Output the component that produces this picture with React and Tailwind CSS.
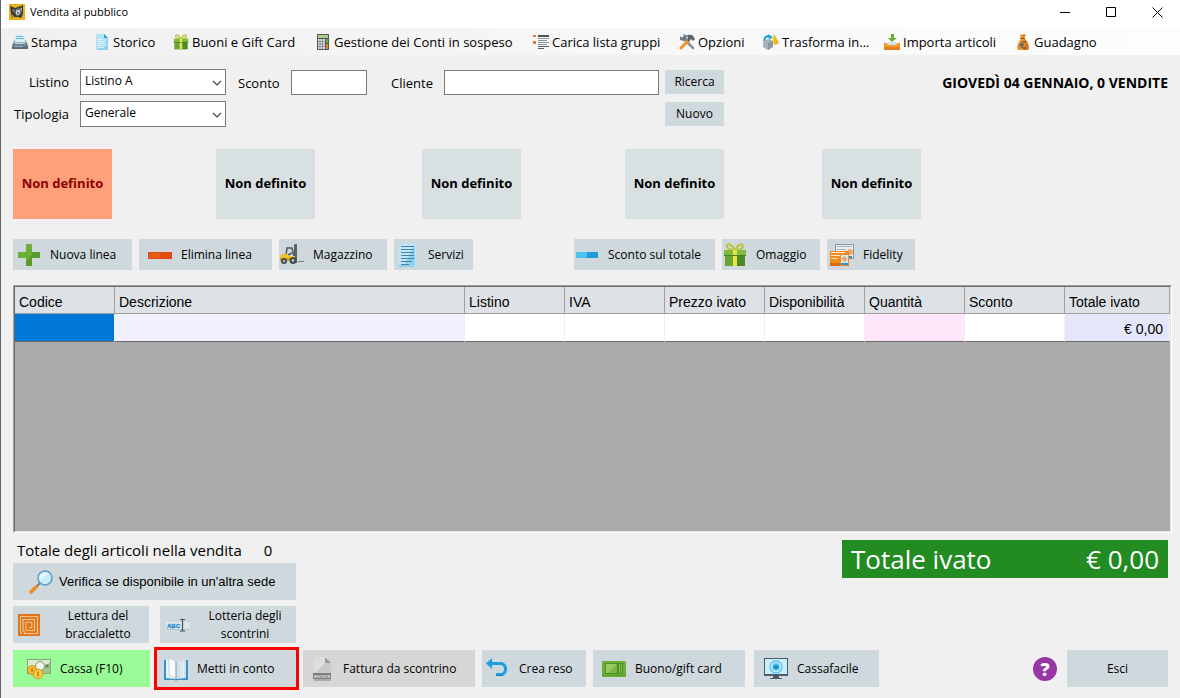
import React, { useState } from 'react';

const PrinterIcon = () => (
  <svg viewBox="0 0 16 16" className="size-4 shrink-0">
    <path d="M3 1h9l1 7H2z" fill="#d6eef8" />
    <path d="M4 2h7v1H4zM4 4h8v1H4z" fill="#6fb5d8" />
    <path d="M2 6l-1 3h14l-1-3h-1v2H3V6z" fill="#9fb0bd" />
    <path d="M1 9h14l1 3v3H0v-3z" fill="#6d8090" />
    <path d="M3 9h10v1H3z" fill="#c3d0d8" />
    <path d="M0 12h16v3H0z" fill="#5b6b78" />
    <path d="M2 12h9v1H2z" fill="#9fb0bd" />
    <path d="M12 11h2v1h-2z" fill="#38b6e8" />
  </svg>
);

const PageIcon = () => (
  <svg viewBox="0 0 16 16" className="size-4 shrink-0">
    <path d="M2 0h8l4 4v12H2z" fill="#b5e2f7" />
    <path d="M2 16L14 4v12z" fill="#93d0ef" />
    <path d="M10 0l4 4h-4z" fill="#2a9fd8" />
    <path d="M4 5h5v1H4zM4 7h8v1H4zM4 9h8v1H4zM4 11h8v1H4zM4 13h6v1H4z" fill="#dff4fd" />
  </svg>
);

const GiftIcon = ({ className = 'size-6' }) => (
  <svg viewBox="0 0 24 24" className={`${className} shrink-0`}>
    <path d="M11 6C9 1 4 0 4 3s4 4 7 4zM13 6c2-5 7-6 7-3s-4 4-7 4z" fill="none" stroke="#b9c53c" strokeWidth="2" />
    <path d="M1 7h22v5H1z" fill="#82b93c" />
    <path d="M2 12h10v11H2z" fill="#6aa52f" />
    <path d="M12 12h10v11H12z" fill="#4e8a26" />
    <path d="M10 7h4v16h-4z" fill="#e9e04d" />
    <path d="M1 12h22v1H1z" fill="#467e22" />
  </svg>
);

const CalculatorIcon = () => (
  <svg viewBox="0 0 16 16" className="size-4 shrink-0">
    <path d="M2 0h12v16H2z" fill="#51575b" />
    <path d="M3 1h10v3H3z" fill="#a9cf86" />
    <path d="M3 5h7v10H3z" fill="#dfe3e5" />
    <path d="M5 5v10M7.500 5v10M3 7.500h7M3 10h7M3 12.500h7" stroke="#6f777c" strokeWidth="0.700" />
    <path d="M11 5h2v4h-2z" fill="#5fae3f" />
    <path d="M11 10h2v5h-2z" fill="#e8832a" />
  </svg>
);

const ListIcon = () => (
  <svg viewBox="0 0 16 16" className="size-4 shrink-0">
    <path d="M0 1h3v2H0zM0 7h3v3H0z" fill="#e07a35" />
    <path d="M5 1h11v2H5z" fill="#4d5459" />
    <path d="M5 4h11v1H5zM5 6h9v1H5zM5 8h11v1H5zM5 10h9v1H5z" fill="#8d969c" />
    <path d="M5 12h11v1H5zM5 14h6v1H5z" fill="#5a6268" />
  </svg>
);

const ToolsIcon = () => (
  <svg viewBox="0 0 16 16" className="size-4 shrink-0">
    <path d="M4 4l10 10" stroke="#87939b" strokeWidth="2.600" strokeLinecap="round" />
    <path d="M1 2l2 2 2-2-1-2 3 1 1 4-3 2-4-1z" fill="#6f7b83" />
    <path d="M2 14l7-7" stroke="#f0932b" strokeWidth="3" strokeLinecap="round" />
    <path d="M7 2c3-2 6-1 7 0l2 3-2 2-2-2-2 3-2-2 1-3z" fill="#5c666d" />
  </svg>
);

const TransformIcon = () => (
  <svg viewBox="0 0 16 16" className="size-4 shrink-0">
    <path d="M1.500 7C1 3 4 1.500 7 2.500" fill="none" stroke="#2aa5e0" strokeWidth="2.400" />
    <path d="M5 0l5 3-4 3z" fill="#2aa5e0" />
    <path d="M11 0l5 9-4 2-4-2z" fill="#f9cf3c" />
    <path d="M11 0l5 9-4 2z" fill="#eeb222" />
    <path d="M0 8l5-3 5 2v6l-5 3-5-3z" fill="#a3b1ba" />
    <path d="M5 9l5-2v6l-5 3z" fill="#8a9aa5" />
  </svg>
);

const ImportIcon = () => (
  <svg viewBox="0 0 16 16" className="size-4 shrink-0">
    <path d="M0 9h3l1 2h8l1-2h3v7H0z" fill="#f39a2b" />
    <path d="M3 8h10l-1 3H4z" fill="#cfe3ec" />
    <path d="M0 13h16v3H0z" fill="#e5801c" />
    <path d="M7 0h3v4h3L8 8 4 4h3z" fill="#6cae34" />
  </svg>
);

const MoneyBagIcon = () => (
  <svg viewBox="0 0 16 16" className="size-4 shrink-0">
    <path d="M5 0l2 1 2-1 2 1-2 4H6z" fill="#e88a24" />
    <path d="M6 5h4c2 2 4 6 4 9l-1 2H3l-1-2c0-3 2-7 4-9z" fill="#f0962c" />
    <path d="M10 5c2 2 4 6 4 9l-1 2H9z" fill="#d9791c" />
    <path d="M5 4h5v1H5z" fill="#8a5a22" />
    <path d="M11 8c-2-1-5 0-5 3s3 4 5 2.500M4.500 10.300H9M4.500 12H9" fill="none" stroke="#5a5f63" strokeWidth="1.200" />
  </svg>
);

const AppLogo = () => (
  <svg viewBox="0 0 16 16" className="size-4 shrink-0">
    <path d="M0 0h16v16H0z" fill="#e8b01f" />
    <path d="M1 2l3 1 2 1 6-2 2-1v9l-2 4-3-1H5l-2 1-1-5z" fill="#3b3b35" />
    <path d="M3 5l3 1-1 3zM7 5l5-1 1 3-2 4-3 1-2-3z" fill="#7b888a" />
    <path d="M7 7l3-1 1 2-2 3-2-1z" fill="#d7dedf" />
    <path d="M8 8h1.500v1.500H8z" fill="#2f3436" />
    <path d="M3 11l2 1-1 2zM12 5l1-2v3z" fill="#f3cf62" />
  </svg>
);

const PlusIcon = () => (
  <svg viewBox="0 0 24 24" className="size-6 shrink-0">
    <path d="M9 1h6v8h8v6h-8v8H9v-8H1V9h8z" fill="#6dae35" />
    <path d="M15 9h8v6h-8v8H9v-5l6-6z" fill="#5a9a2b" />
  </svg>
);

const MinusIcon = () => (
  <svg viewBox="0 0 24 24" className="size-6 shrink-0">
    <path d="M0 9h24v7H0z" fill="#e24a12" />
    <path d="M1 10h11v5H1z" fill="#e65a1b" />
  </svg>
);

const ForkliftIcon = () => (
  <svg viewBox="0 0 24 24" className="size-6 shrink-0">
    <path d="M14 2l1-1h2v19h-3z" fill="#596268" />
    <path d="M18 18h6v1h-6z" fill="#7d868b" />
    <path d="M6 12l1-7h5l2 8M8 12l4-2" fill="none" stroke="#4f575c" strokeWidth="1.500" />
    <path d="M2 11h5l2 2h6v5H0v-4z" fill="#f5c321" />
    <path d="M0 15h14v3H0z" fill="#d9a018" />
    <circle cx="4" cy="18" r="3" fill="#454c50" />
    <circle cx="4" cy="18" r="1.200" fill="#b7bfc3" />
    <circle cx="13" cy="17.500" r="3.500" fill="#454c50" />
    <circle cx="13" cy="17.500" r="1.400" fill="#b7bfc3" />
  </svg>
);

const ServicesIcon = () => (
  <svg viewBox="0 0 24 24" className="size-6 shrink-0">
    <path d="M4 1h17v22H4z" fill="#bfe9fa" />
    <path d="M3 22c0 2 2 2 3 2h11c2 0 2-1 2-2z" fill="#8bd2f0" />
    <path d="M20 1v22H9z" fill="#8fd3f2" />
    <path d="M6 3h13v1H6zM6 6h13v1H6zM6 9h13v1H6zM6 12h13v1H6zM6 15h13v1H6zM6 18h11v1H6zM6 21h8v1H6z" fill="#4b7ea0" />
  </svg>
);

const DiscountIcon = () => (
  <svg viewBox="0 0 24 24" className="size-6 shrink-0">
    <path d="M1 9h22v6H1z" fill="#1f9bdc" />
    <path d="M1 9h11v6H1z" fill="#4cc0ee" />
  </svg>
);

const CardsIcon = () => (
  <svg viewBox="0 0 24 24" className="size-6 shrink-0">
    <path d="M5 1h19v15H5z" fill="#8e979d" />
    <path d="M6 2h17v13H6z" fill="#e4eef2" />
    <path d="M7 3h15v1H7zM7 6h9v1H7z" fill="#a8b4bb" />
    <circle cx="20" cy="9" r="3" fill="#f0a76a" />
    <path d="M17 13h5v2h-5z" fill="#2f8fd0" />
    <path d="M0 8h19v15H0z" fill="#f08a1c" />
    <path d="M1 9h14v1H1zM1 12h9v1H1zM1 15h7v1H1z" fill="#fde8cf" />
    <path d="M11 12h7v10h-7z" fill="#cfe9f7" />
    <circle cx="14.500" cy="16" r="2.500" fill="#f0a76a" />
    <path d="M11 20h7v2h-7z" fill="#2f8fd0" />
    <path d="M0 20h10v3H0z" fill="#dd6b10" />
  </svg>
);

const MagnifierIcon = () => (
  <svg viewBox="0 0 24 24" className="size-6 shrink-0">
    <path d="M1 23l7-7" stroke="#f08a24" strokeWidth="3.500" />
    <path d="M8 16l3-3" stroke="#6d777d" strokeWidth="2" />
    <circle cx="16" cy="8" r="7" fill="#c9ecfb" stroke="#5c9cc5" strokeWidth="1.500" />
    <path d="M11 11a6 6 0 0 1 8-8z" fill="#e8f8fe" />
  </svg>
);

const RfidIcon = () => (
  <svg viewBox="0 0 24 24" className="size-6 shrink-0">
    <path d="M1 1h22v22H1z" fill="#e0771c" />
    <path d="M5 20.500L3.500 19V3.500h17v17h-13V19L6 17.500V6.500h11.500v11H9.500l-.7-.8V9.300h6v5.400h-3" fill="none" stroke="#f6c48c" strokeWidth="1.100" />
  </svg>
);

const TextFieldIcon = () => (
  <svg viewBox="0 0 24 24" className="size-6 shrink-0">
    <path d="M0 9h24v8H0z" fill="#dde6ea" />
    <path d="M0 16h24v1H0z" fill="#b9c6cc" />
    <text x="1" y="15" fontSize="6" fontWeight="bold" fontFamily="Liberation Sans, sans-serif" fill="#1c87c9" stroke="#1c87c9" strokeWidth="0.300">ABC</text>
    <path d="M14 6.500h5M14 18h5M16.500 7v11" stroke="#475056" strokeWidth="1.200" />
  </svg>
);

const CashIcon = () => (
  <svg viewBox="0 0 24 24" className="size-6 shrink-0">
    <path d="M0 2h24v15H0z" fill="#8aa57c" />
    <path d="M1 3h22v13H1z" fill="#dcebd0" />
    <path d="M12 16L23 5v11z" fill="#9fc48b" />
    <circle cx="13" cy="9" r="4.500" fill="#f3f8ee" stroke="#779468" strokeWidth="1" />
    <circle cx="20" cy="9" r="1.800" fill="#5f8a4c" />
    <circle cx="5" cy="13" r="4.500" fill="#f5bd2e" stroke="#c98a14" strokeWidth="0.800" />
    <circle cx="11" cy="17" r="4.800" fill="#f8ca45" stroke="#c98a14" strokeWidth="0.800" />
    <path d="M5 11v4M11 14.500v5" stroke="#b4740e" strokeWidth="1.300" />
  </svg>
);

const BookIcon = () => (
  <svg viewBox="0 0 24 24" className="size-6 shrink-0">
    <path d="M0 3h2v18h20V3h2v20H13l-1 1-1-1H0z" fill="#3a8fc9" />
    <path d="M2 2l9 3v17l-9-1z" fill="#e6f3f9" />
    <path d="M22 3l-10 2v17l10-1z" fill="#cfe2eb" />
    <path d="M5 0l7 5v17l-7-4z" fill="#f7fbfd" stroke="#b5c9d3" strokeWidth="0.800" />
    <path d="M12 5v17" stroke="#8fa6b2" strokeWidth="1" />
    <path d="M17 4v17M19.500 4v17" stroke="#eff7fa" strokeWidth="0.800" />
  </svg>
);

const InvoiceIcon = () => (
  <svg viewBox="0 0 24 24" className="size-6 shrink-0">
    <path d="M4 0h12l5 5v19H4z" fill="#dedede" />
    <path d="M4 17L18 3l3 2v12z" fill="#cacaca" />
    <path d="M15 0l6 6h-6z" fill="#9a9a9a" />
    <path d="M3 16h18v6H3z" fill="#7b7f82" />
    <path d="M4 22h17v2H4z" fill="#a9abac" />
    <text x="4" y="20.500" fontSize="4" fontWeight="bold" fontFamily="Liberation Sans, sans-serif" fill="#e0e2e3">INVOICE</text>
  </svg>
);

const UndoIcon = () => (
  <svg viewBox="0 0 24 24" className="size-6 shrink-0">
    <path d="M5 6.500h11a6 6 0 0 1 0 11h-6" fill="none" stroke="#1f9fdd" strokeWidth="3" />
    <path d="M0 6.500L6 1v11z" fill="#1f9fdd" />
    <path d="M10 18.500h7" stroke="#1479b5" strokeWidth="1" />
  </svg>
);

const BanknoteIcon = () => (
  <svg viewBox="0 0 24 24" className="size-6 shrink-0">
    <rect x="0" y="4" width="24" height="16" rx="1" fill="#6dae35" />
    <path d="M3 6h18v11H3z" fill="#4c8f2a" />
    <path d="M4 7h11v9H4z" fill="#9aca62" />
    <path d="M15 7v9H6z" fill="#7ab545" />
    <path d="M17 7h1v9h-1zM19 7h1v9h-1z" fill="#8cc255" />
    <path d="M0 18h24v1H0z" fill="#5a9a2b" />
  </svg>
);

const MonitorIcon = () => (
  <svg viewBox="0 0 24 24" className="size-6 shrink-0">
    <path d="M0 1h24v18H0z" fill="#4a5a66" />
    <path d="M1 2h22v15H1z" fill="#c8effc" />
    <circle cx="12" cy="10" r="6" fill="none" stroke="#5cc4ec" strokeWidth="1.300" />
    <circle cx="12" cy="10" r="3.800" fill="#57bde9" />
    <circle cx="12" cy="10" r="2" fill="#1684c6" />
    <path d="M9 19h6v2h3v1H6v-1h3z" fill="#4a5a66" />
  </svg>
);

const MENU_ITEMS = [
  { label: 'Stampa', icon: <PrinterIcon />, width: 'w-[82px]' },
  { label: 'Storico', icon: <PageIcon />, width: 'w-[79px]' },
  { label: 'Buoni e Gift Card', icon: <GiftIcon className="size-4" />, width: 'w-[142px]' },
  { label: 'Gestione dei Conti in sospeso', icon: <CalculatorIcon />, width: 'w-[218px]' },
  { label: 'Carica lista gruppi', icon: <ListIcon />, width: 'w-[146px]' },
  { label: 'Opzioni', icon: <ToolsIcon />, width: 'w-[84px]' },
  { label: 'Trasforma in...', icon: <TransformIcon />, width: 'w-[121px]' },
  { label: 'Importa articoli', icon: <ImportIcon />, width: 'w-[131px]' },
  { label: 'Guadagno', icon: <MoneyBagIcon />, width: 'w-[84px]' },
];

const COLUMNS = [
  { label: 'Codice', width: 'w-[100px]', cell: 'bg-[#0078d7]' },
  { label: 'Descrizione', width: '', cell: 'bg-[#f0f0ff]' },
  { label: 'Listino', width: 'w-[100px]', cell: 'bg-white' },
  { label: 'IVA', width: 'w-[100px]', cell: 'bg-white' },
  { label: 'Prezzo ivato', width: 'w-[100px]', cell: 'bg-white' },
  { label: 'Disponibilità', width: 'w-[100px]', cell: 'bg-white' },
  { label: 'Quantità', width: 'w-[100px]', cell: 'bg-[#ffe6fa]' },
  { label: 'Sconto', width: 'w-[100px]', cell: 'bg-white' },
  { label: 'Totale ivato', width: 'w-[105px]', cell: 'bg-[#e6e6fa]', value: '€ 0,00' },
];

const CATEGORY_GAPS = ['', 'ml-[104px]', 'ml-[107px]', 'ml-[104px]', 'ml-[98px]'];

const ToolButton = ({ icon, className, children }) => (
  <button className={`flex shrink-0 items-center gap-[9px] whitespace-nowrap text-[12px] ${className}`}>
    {icon}
    {children}
  </button>
);

const SelectBox = ({ id, options }) => (
  <div className="relative">
    <select
      id={id}
      className="block h-[26px] w-[146px] appearance-none border border-[#7a7a7a] bg-white pb-0.5 pl-1 text-[12px] outline-none"
    >
      {options.map((option) => (
        <option key={option}>{option}</option>
      ))}
    </select>
    <svg viewBox="0 0 10 6" className="pointer-events-none absolute top-[11px] right-1 h-1.5 w-2.5">
      <path d="M1 1l4 4 4-4" fill="none" stroke="#444" strokeWidth="1.200" />
    </svg>
  </div>
);

const TitleBar = () => (
  <header className="flex h-7 items-center bg-white pb-1 pl-2">
    <AppLogo />
    <h1 className="ml-[5px] flex-1 text-[11px]">Vendita al pubblico</h1>
    <button aria-label="Riduci a icona" className="flex h-6 w-[46px] items-center justify-center">
      <svg viewBox="0 0 11 11" className="size-[11px]">
        <path d="M0 5.500h10" stroke="#000" />
      </svg>
    </button>
    <button aria-label="Ingrandisci" className="flex h-6 w-[46px] items-center justify-center">
      <svg viewBox="0 0 11 11" className="size-[11px]">
        <path d="M.5.500h9v9h-9z" fill="none" stroke="#000" />
      </svg>
    </button>
    <button aria-label="Chiudi" className="flex h-6 w-[46px] items-center justify-center">
      <svg viewBox="0 0 11 11" className="size-[11px]">
        <path d="M.5.500l10 10M10.500.500l-10 10" stroke="#000" />
      </svg>
    </button>
  </header>
);

const ArticlesTable = () => (
  <div className="mr-2 flex flex-1 flex-col border border-t-[#a0a0a0] border-r-white border-b-white border-l-[#a0a0a0]">
    <div className="flex-1 border border-t-[#696969] border-r-[#e3e3e3] border-b-[#e3e3e3] border-l-[#696969] bg-[#ababab]">
      <table className="w-full table-fixed border-separate border-spacing-0 font-['Liberation_Sans',Arial,sans-serif] text-[14px]">
        <thead>
          <tr>
            {COLUMNS.map((column) => (
              <th
                key={column.label}
                className={`h-[27px] border-r border-b border-[#a0a0a0] bg-[#dee2e7] px-1 pt-1 pb-0 text-left leading-5 font-normal ${column.width}`}
              >
                {column.label}
              </th>
            ))}
          </tr>
        </thead>
        <tbody>
          <tr>
            {COLUMNS.map((column) => (
              <td
                key={column.label}
                className={`h-7 border-r border-b border-r-[#f0f0f0] border-b-[#696969] px-1.5 pt-0.5 pb-0 text-right leading-5 ${column.cell}`}
              >
                {column.value}
              </td>
            ))}
          </tr>
        </tbody>
      </table>
    </div>
  </div>
);

const App = () => {
  const [selected, setSelected] = useState(0);

  return (
    <div className="flex min-h-screen flex-col border-l border-[#5f666c] bg-[#f0f0f0] font-['Open_Sans','Noto_Sans',sans-serif] text-[13px] text-black">
      <TitleBar />

      <nav className="flex h-[27px] items-center bg-linear-to-r from-[#f0f0f0] to-[#fdfdfd] pl-[11px]">
        {MENU_ITEMS.map((item) => (
          <button key={item.label} className={`flex shrink-0 items-center gap-[3px] whitespace-nowrap ${item.width}`}>
            {item.icon}
            <span className="pt-0.5">{item.label}</span>
          </button>
        ))}
      </nav>

      <main className="flex flex-1 flex-col pt-3.5 pb-[11px] pl-3">
        <form className="flex items-start pr-3" onSubmit={(e) => e.preventDefault()}>
          <div className="grid grid-cols-[56px_146px] items-center gap-x-[11px] gap-y-1.5">
            <label htmlFor="listino" className="pt-0.5 text-right">Listino</label>
            <SelectBox id="listino" options={['Listino A', 'Listino B']} />
            <label htmlFor="tipologia" className="pt-0.5 text-right">Tipologia</label>
            <SelectBox id="tipologia" options={['Generale']} />
          </div>
          <div className="flex h-[27px] items-center">
            <label htmlFor="sconto" className="ml-3 w-[53px] pt-0.5">Sconto</label>
            <input id="sconto" type="text" className="h-[25px] w-[76px] border border-[#7a7a7a] bg-white px-1 outline-none" />
            <label htmlFor="cliente" className="ml-6 w-[53px] pt-0.5">Cliente</label>
            <input id="cliente" type="text" className="h-[25px] w-[215px] border border-[#7a7a7a] bg-white px-1 outline-none" />
          </div>
          <div className="mt-px ml-1.5 flex w-[59px] flex-col gap-2">
            <button type="button" className="h-6 bg-[#cfd8dc] text-[12px]">Ricerca</button>
            <button type="button" className="h-6 bg-[#cfd8dc] text-[12px]">Nuovo</button>
          </div>
          <p className="mt-1 flex-1 text-right text-[14px] leading-5 font-bold">GIOVEDÌ 04 GENNAIO, 0 VENDITE</p>
        </form>

        <div className="mt-[22px] flex">
          {CATEGORY_GAPS.map((gap, index) => (
            <button
              key={index}
              onClick={() => setSelected(index)}
              className={`h-[70px] w-[99px] shrink-0 text-[13px] font-bold ${gap} ${
                selected === index ? 'bg-[#ffa07a] text-[#8b0000]' : 'bg-[#d8e0e2]'
              }`}
            >
              Non definito
            </button>
          ))}
        </div>

        <div className="mt-5 mb-[15px] flex gap-[7px]">
          <ToolButton icon={<PlusIcon />} className="h-[31px] w-[119px] bg-[#cfd8dc] pl-1">Nuova linea</ToolButton>
          <ToolButton icon={<MinusIcon />} className="h-[31px] w-[133px] bg-[#cfd8dc] pl-[9px]">Elimina linea</ToolButton>
          <ToolButton icon={<ForkliftIcon />} className="h-[31px] w-[108px] bg-[#cfd8dc] pl-px">Magazzino</ToolButton>
          <ToolButton icon={<ServicesIcon />} className="h-[31px] w-[79px] bg-[#cfd8dc] pl-px">Servizi</ToolButton>
          <ToolButton icon={<DiscountIcon />} className="ml-[94px] h-[31px] w-[141px] bg-[#cfd8dc] pl-px">Sconto sul totale</ToolButton>
          <ToolButton icon={<GiftIcon />} className="h-[31px] w-[98px] bg-[#cfd8dc] pl-px">Omaggio</ToolButton>
          <ToolButton icon={<CardsIcon />} className="h-[31px] w-[88px] bg-[#cfd8dc] pl-[3px]">Fidelity</ToolButton>
        </div>

        <ArticlesTable />

        <section className="mt-[7px] flex items-start justify-between pr-3">
          <div className="w-[283px]">
            <p className="flex h-[23px] items-center gap-[22px] pb-0.5 pl-1 text-[15px]">
              <span>Totale degli articoli nella vendita</span>
              <span>0</span>
            </p>
            <button className="flex h-[37px] w-full items-center gap-1.5 bg-[#cfd8dc] pl-4 font-['Liberation_Sans',Arial,sans-serif] text-[13px]">
              <MagnifierIcon />
              Verifica se disponibile in un'altra sede
            </button>
            <div className="mt-1.5 flex justify-between">
              <button className="flex h-[37px] w-[136px] items-center bg-[#cfd8dc] pl-1 text-[12px] leading-[18px]">
                <RfidIcon />
                <span className="flex-1 pl-1.5">Lettura del<br />braccialetto</span>
              </button>
              <button className="flex h-[37px] w-[136px] items-center bg-[#cfd8dc] pl-1.5 text-[12px] leading-[18px]">
                <TextFieldIcon />
                <span className="flex-1 pl-1">Lotteria degli<br />scontrini</span>
              </button>
            </div>
          </div>
          <div className="flex h-[38px] w-[326px] items-center justify-between bg-[#228b22] px-[9px] text-[26px] text-white">
            <span>Totale ivato</span>
            <span>€ 0,00</span>
          </div>
        </section>

        <footer className="mt-[7px] flex items-center gap-[7px] pr-3">
          <ToolButton icon={<CashIcon />} className="h-[37px] w-[137px] bg-[#98fb98] pl-3.5">Cassa (F10)</ToolButton>
          <ToolButton icon={<BookIcon />} className="h-[37px] w-[139px] bg-[#cfd8dc] pl-[7px] ring-3 ring-[#ff0000]">Metti in conto</ToolButton>
          <ToolButton icon={<InvoiceIcon />} className="h-[37px] w-[172px] bg-[#d6d6d6] pl-[7px]">Fattura da scontrino</ToolButton>
          <ToolButton icon={<UndoIcon />} className="h-[37px] w-[104px] bg-[#cfd8dc] pl-1">Crea reso</ToolButton>
          <ToolButton icon={<BanknoteIcon />} className="h-[37px] w-[152px] bg-[#cfd8dc] pl-[9px]">Buono/gift card</ToolButton>
          <ToolButton icon={<MonitorIcon />} className="ml-0.5 h-[37px] w-[125px] bg-[#cfd8dc] pl-[10px]">Cassafacile</ToolButton>
          <button
            aria-label="Aiuto"
            className="mr-[3px] ml-auto flex size-6 items-center justify-center rounded-full bg-[#9637a5] text-[18px] leading-none font-extrabold text-white"
          >
            ?
          </button>
          <button className="h-[37px] w-[101px] bg-[#cfd8dc] text-[12px]">Esci</button>
        </footer>
      </main>
    </div>
  );
};

export default App;
